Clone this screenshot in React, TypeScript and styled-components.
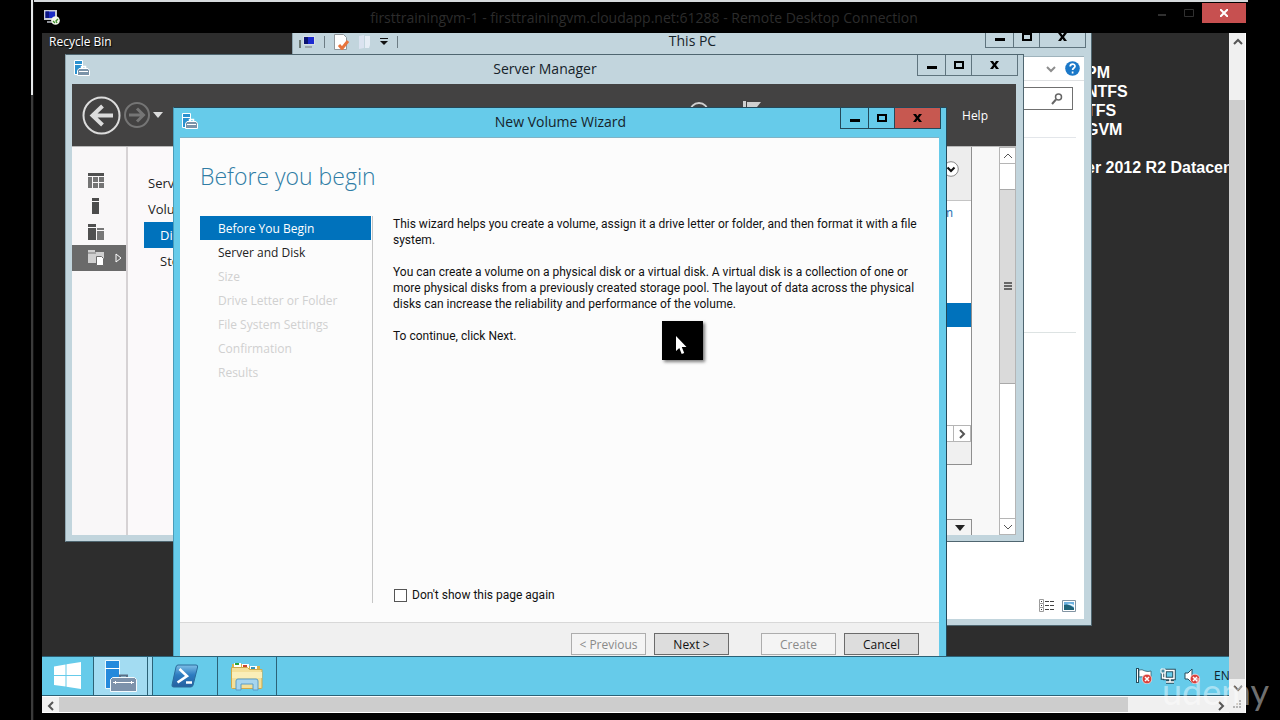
import React from 'react';
import styled, { createGlobalStyle, css } from 'styled-components';

const UI = '"Open Sans", "Noto Sans", sans-serif';

const Global = createGlobalStyle`
  * { box-sizing: border-box; }
  body { margin: 0; background: #000; font-family: ${UI}; font-size: 12px; line-height: 16px; }
  button, input { font: inherit; color: inherit; margin: 0; }
  button { padding: 0; border: 0; background: none; }
  h1, h2, p, ul { margin: 0; padding: 0; font-weight: 400; }
  svg { display: block; flex: none; }
`;

/* ---------- remote desktop frame ---------- */

const Page = styled.div`
  position: relative;
  display: flex;
  min-height: 100vh;
  padding: 0 32px 0 31px;
  overflow: hidden;
  background: #000;
`;

const Backdrop = styled.div`
  width: 3px;
  border-right: 1px solid #111;
  background: linear-gradient(#e6e8e9 95px, #3a3a3a 95px);
`;

const RemoteWindow = styled.div`
  flex: 1;
  min-width: 0;
  display: flex;
  flex-direction: column;
  padding: 0 2px 7px 8px;
  border-top: 2px solid #d6dadc;
`;

const RemoteTitle = styled.header`
  display: grid;
  grid-template-columns: 1fr auto 1fr;
  align-items: center;
  height: 31px;
  color: #2c2c2c;
  font-size: 14px;
`;

const RemoteControls = styled.div`
  display: flex;
  justify-content: flex-end;
  align-self: start;
  padding-top: 1px;
`;

const RemoteControl = styled.button<{ $close?: boolean }>`
  display: grid;
  place-items: center;
  width: ${p => (p.$close ? 44 : 27)}px;
  height: 20px;
  color: ${p => (p.$close ? '#fff' : '#303030')};
  background: ${p => (p.$close ? '#c75050' : 'transparent')};
`;

const Viewport = styled.div`
  flex: 1;
  display: grid;
  grid-template: minmax(0, 1fr) 17px / minmax(0, 1fr) 17px;
`;

const Session = styled.div`
  display: flex;
  flex-direction: column;
  overflow: hidden;
`;

const Desktop = styled.main`
  position: relative;
  flex: 1;
  min-height: 622px;
  overflow: hidden;
  background: #2d2d2d;
`;

const VerticalBar = styled.div`
  grid-row: 1 / 3;
  grid-column: 2;
  display: flex;
  flex-direction: column;
  border-right: 1px solid #fff;
  background: #f0f0f0;
  color: #555;
`;

const HorizontalBar = styled.div`
  display: flex;
  border-top: 1px solid #fff;
  border-bottom: 1px solid #fff;
  background: #f0f0f0;
  color: #555;
`;

const BarButton = styled.button`
  display: grid;
  place-items: center;
  width: 17px;
  height: 17px;
`;

const Thumb = styled.div`
  flex: 1;
  background: #cdcdcd;
`;

const TrackGap = styled.div<{ $size: number }>`
  flex: 0 0 ${p => p.$size}px;
`;

const Corner = styled.div`
  display: grid;
  place-items: center;
  height: 17px;
`;

/* ---------- desktop contents ---------- */

const ShortcutLabel = styled.p`
  position: absolute;
  left: 7px;
  top: 1px;
  color: #fff;
  text-shadow: 1px 1px 1px #000;
`;

const MachineInfo = styled.div`
  position: absolute;
  left: 1044px;
  top: 30px;
  color: #fff;
  font: bold 16px/19px "Liberation Sans", Arial, sans-serif;
  white-space: pre;
`;

const Frame = styled.section<{ $x: number; $y: number; $w: number; $h: number; $active?: boolean }>`
  position: absolute;
  left: ${p => p.$x}px;
  top: ${p => p.$y}px;
  width: ${p => p.$w}px;
  height: ${p => p.$h}px;
  display: flex;
  flex-direction: column;
  padding: 0 7px 6px 6px;
  border: 1px solid ${p => (p.$active ? '#23495a' : '#4f6670')};
  border-left-color: ${p => (p.$active ? '#4a9dba' : '#8fa6b0')};
  background: ${p => (p.$active ? '#66cbea' : '#c2d5dd')};
`;

const TitleBar = styled.header`
  display: grid;
  grid-template-columns: 1fr auto 1fr;
  flex: none;
  height: 29px;
  margin-right: -2px;
  color: #16232a;
`;

const TitleText = styled.h2`
  align-self: center;
  padding-bottom: 2px;
  font-size: 14px;
  line-height: 20px;
`;

const TitleIcons = styled.div`
  display: flex;
  align-items: center;
  padding: 0 0 3px 2px;
`;

const QuickTools = styled(TitleIcons)`
  gap: 9px;
  padding: 0;
`;

const Separator = styled.span`
  width: 1px;
  height: 12px;
  background: #6c7c84;
`;

const Controls = styled.div<{ $active?: boolean }>`
  display: flex;
  justify-self: end;
  height: 21px;
  border: 1px solid ${p => (p.$active ? '#23495a' : '#5f747e')};
  border-top: 0;
  color: #000;
`;

const Control = styled.button<{ $kind: 'min' | 'max' | 'close'; $active?: boolean }>`
  display: grid;
  place-items: center;
  width: ${p => ({ min: 27, max: 26, close: 46 })[p.$kind]}px;
  ${p => p.$kind !== 'min' && css`border-left: 1px solid ${p.$active ? '#23495a' : '#5f747e'};`}
  ${p => p.$kind === 'close' && p.$active && css`background: #c75850;`}
`;

/* ---------- This PC ---------- */

const ExplorerBody = styled.div`
  flex: 1;
  display: flex;
  flex-direction: column;
  background: #fff;
  border-top: 1px solid #9fb3bc;
`;

const RibbonRow = styled.div`
  display: flex;
  align-items: center;
  justify-content: flex-end;
  gap: 9px;
  height: 24px;
  padding-right: 4px;
  border-bottom: 1px solid #dfe1e3;
  color: #8d8d8d;
`;

const SearchRow = styled.div`
  display: flex;
  justify-content: flex-end;
  margin-right: 8px;
  padding: 6px 3px 27px 0;
  border-bottom: 1px solid #e3e6ea;
`;

const SearchBox = styled.label`
  display: flex;
  align-items: center;
  width: 180px;
  height: 23px;
  padding-right: 9px;
  border: 1px solid #707070;
  color: #666;
`;

const SearchInput = styled.input`
  flex: 1;
  min-width: 0;
  border: 0;
  outline: 0;
  background: transparent;
`;

const FileArea = styled.div`
  height: 195px;
  margin-right: 8px;
  border-bottom: 1px solid #dde3e3;
`;

const ViewSwitch = styled.div`
  display: flex;
  justify-content: flex-end;
  gap: 7px;
  margin-top: auto;
  padding: 0 8px 7px 0;
`;

/* ---------- Server Manager ---------- */

const ManagerHeader = styled.div`
  display: flex;
  align-items: center;
  height: 62px;
  flex: none;
  padding: 0 28px 0 10px;
  background: #434242;
  color: #fff;
`;

const NavArrows = styled.div`
  display: flex;
  align-items: center;
  gap: 3px;
`;

const HeaderTools = styled.div`
  display: flex;
  gap: 34px;
  margin: 0 201px 0 auto;
  padding-bottom: 4px;
`;

const HeaderLink = styled.button`
  padding-top: 2px;
`;

const ManagerBody = styled.div`
  flex: 1;
  min-height: 0;
  display: flex;
  background: #f8f8f8;
  border-top: 1px solid #b9b9b9;
`;

const IconRail = styled.nav`
  flex: none;
  width: 56px;
  padding-top: 20px;
  border-right: 2px solid #d6d2d4;
  background: #f9f7f8;
`;

const RailItem = styled.button<{ $on?: boolean }>`
  display: flex;
  align-items: center;
  gap: 11px;
  width: 54px;
  height: 26px;
  padding-left: 16px;
  background: ${p => (p.$on ? '#6a6a6a' : 'transparent')};
`;

const PageList = styled.nav`
  flex: 1;
  padding: 23px 0 0 16px;
  background: #fbf9fa;
  font-size: 13px;
`;

const PageLink = styled.a<{ $child?: boolean; $on?: boolean }>`
  display: block;
  height: 26px;
  padding-left: ${p => (p.$child ? 16 : 4)}px;
  line-height: 26px;
  color: ${p => (p.$on ? '#fff' : '#222')};
  background: ${p => (p.$on ? '#0072bc' : 'transparent')};
  text-decoration: none;
`;

const TileColumn = styled.div`
  display: flex;
  flex-direction: column;
  width: 80px;
  margin-right: 27px;
`;

const Tile = styled.div`
  display: flex;
  flex-direction: column;
  height: 318px;
  border: solid #8f8f8f;
  border-width: 0 1px 1px 0;
  background: #fff;
`;

const TileHead = styled.div`
  display: flex;
  justify-content: flex-end;
  align-items: center;
  height: 54px;
  padding: 0 12px 9px 0;
  border-bottom: 1px solid #c4c4c4;
  background: #ededed;
`;

const TileLink = styled.a`
  height: 102px;
  padding: 4px 18px 0 0;
  text-align: right;
  color: #1b6fb3;
  text-decoration: none;
`;

const SelectedRow = styled.div`
  height: 24px;
  background: #0072bc;
`;

const TileScroll = styled.div`
  display: flex;
  justify-content: flex-end;
  height: 17px;
  margin-top: auto;
  border: 1px solid #b5b5b5;
  color: #555;
`;

const TileScrollButton = styled(BarButton)`
  height: 15px;
  border-left: 1px solid #b5b5b5;
`;

const TileFoot = styled.div`
  height: 22px;
  background: #f0f0f0;
`;

const NextTile = styled.div`
  display: flex;
  justify-content: flex-end;
  align-items: center;
  height: 16px;
  margin-top: auto;
  padding-right: 6px;
  border: solid #8f8f8f;
  border-width: 1px 1px 0 0;
  background: #f4f4f4;
`;

const ManagerBar = styled.div`
  display: flex;
  flex-direction: column;
  width: 17px;
  border: 1px solid #b5b5b5;
  background: #fff;
  color: #555;
`;

const ManagerBarButton = styled.button<{ $end?: boolean }>`
  display: grid;
  place-items: center;
  height: 16px;
  border: 0 solid #b5b5b5;
  border-width: ${p => (p.$end ? '1px 0 0' : '0 0 1px')};
`;

const ManagerThumb = styled.div`
  display: grid;
  place-items: center;
  height: 195px;
  margin: 25px 0 auto;
  border: solid #a9a9a9;
  border-width: 1px 0;
  background: #dadada;
`;

/* ---------- wizard ---------- */

const WizardBody = styled.div`
  flex: 1;
  display: flex;
  flex-direction: column;
  background: #fcfcfc;
  border-top: 1px solid #7fb3c6;
`;

const WizardHeading = styled.h1`
  padding: 20px 20px 0;
  color: #2f7ca5;
  font-size: 23px;
  font-weight: 300;
  line-height: 36px;
`;

const WizardColumns = styled.div`
  display: flex;
  height: 387px;
  margin-top: 22px;
  padding-left: 20px;
`;

const Steps = styled.ul`
  width: 173px;
  flex: none;
  padding-right: 1px;
  border-right: 1px solid #c6c6c6;
  list-style: none;
`;

const Step = styled.li<{ $state: 'current' | 'open' | 'locked' }>`
  height: 24px;
  padding-left: 18px;
  line-height: 26px;
  color: ${p => ({ current: '#fff', open: '#222', locked: '#d0d0d0' })[p.$state]};
  background: ${p => (p.$state === 'current' ? '#0072bc' : 'transparent')};
`;

const Explanation = styled.div`
  flex: 1;
  display: flex;
  flex-direction: column;
  gap: 16px;
  padding-left: 20px;
  color: #111;
  font-family: Roboto, "Open Sans", sans-serif;
  white-space: nowrap;
`;

const SkipOption = styled.label`
  display: flex;
  align-items: center;
  gap: 5px;
  margin: auto 0 0 1px;
`;

const Checkbox = styled.input`
  appearance: none;
  width: 13px;
  height: 13px;
  border: 1px solid #555;
  background: #fff;
`;

const WizardFooter = styled.footer`
  display: flex;
  justify-content: flex-end;
  flex: 1;
  margin-top: 19px;
  padding: 10px 20px 0 0;
  border-top: 1px solid #d8d8d8;
  background: #f0f0f0;
`;

const ButtonPair = styled.div`
  display: flex;
  gap: 8px;
  margin-left: 32px;
`;

const PushButton = styled.button`
  width: 75px;
  height: 22px;
  padding-top: 1px;
  border: 1px solid #6b6b6b;
  background: #dddddd;
  color: #111;
  &:disabled {
    border-color: #adadad;
    background: #f4f4f4;
    color: #8a8a8a;
  }
`;

const Pointer = styled.div`
  position: absolute;
  left: 620px;
  top: 288px;
  width: 41px;
  height: 39px;
  padding: 15px 0 0 14px;
  background: #000;
  box-shadow: 2px 2px 3px rgba(0, 0, 0, 0.5);
`;

/* ---------- taskbar ---------- */

const Taskbar = styled.nav`
  display: flex;
  flex: none;
  height: 40px;
  border: solid #2c6277;
  border-width: 1px 0;
  background: #66cbea;
`;

const TaskButton = styled.button<{ $w: number; $on?: boolean }>`
  display: grid;
  place-items: center;
  width: ${p => p.$w}px;
  border-right: 1px solid #2c6277;
  background: ${p => (p.$on ? '#a3dcf2' : 'transparent')};
`;

const Tray = styled.div`
  display: flex;
  align-items: center;
  gap: 8px;
  margin-left: auto;
  color: #10222a;
`;

const Language = styled.span`
  width: 15px;
  margin-left: 6px;
`;

const Watermark = styled.div`
  position: absolute;
  right: 11px;
  bottom: 8px;
  color: rgba(255, 255, 255, 0.45);
  font: 36px/42px Lato, sans-serif;
`;

/* ---------- drawings ---------- */

const Chevron = ({ d, w = 2 }: { d: 'up' | 'down' | 'left' | 'right'; w?: number }) => {
  const paths = { up: 'M1 7l4-4 4 4', down: 'M1 3l4 4 4-4', left: 'M7 1L3 5l4 4', right: 'M3 1l4 4-4 4' };
  return (
    <svg width="10" height="10" viewBox="0 0 10 10" fill="none" stroke="currentColor" strokeWidth={w}>
      <path d={paths[d]} />
    </svg>
  );
};

const MinimizeGlyph = () => (
  <svg width="10" height="12" viewBox="0 0 10 12"><path d="M0 7h10v3H0z" fill="currentColor" /></svg>
);
const MaximizeGlyph = () => (
  <svg width="10" height="8" viewBox="0 0 10 8"><path d="M1 1h8v6H1z" fill="none" stroke="currentColor" strokeWidth="2" /></svg>
);
const CloseGlyph = () => (
  <svg width="9" height="8" viewBox="0 0 9 8"><path d="M0 0h3l1.500 2.300L6 0h3L6 4l3 4H6L4.500 5.700 3 8H0l3-4z" fill="currentColor" /></svg>
);

const ServerIcon = () => (
  <svg width="16" height="16" viewBox="0 0 16 16">
    <path d="M.5.5h8v14h-8z" fill="#2b91cf" stroke="#fff" />
    <path d="M1 4.500h7" stroke="#fff" />
    <path d="M7.500 8.500V6.500h4v2" fill="none" stroke="#fff" strokeWidth="1.500" />
    <path d="M3.500 10.500l1.500-2h9l1.500 2v5h-12z" fill="#7b93a8" stroke="#fff" />
    <path d="M5 11.500h9" stroke="#fff" />
  </svg>
);

const BigServerIcon = () => (
  <svg width="32" height="32" viewBox="0 0 32 32">
    <path d="M.5.5h14v28h-14z" fill="#2489dc" stroke="#e9f7fd" />
    <path d="M0 8.500h15" stroke="#fff" />
    <path d="M15 18v-2.500h7V18" fill="none" stroke="#5a6f86" strokeWidth="2" />
    <path d="M5.500 19.500l2-2h22l2 2v12h-26z" fill="#7d92ab" stroke="#f4fafd" />
    <path d="M8 22.500h21M10.500 21v3M26.500 21v3" stroke="#fff" />
  </svg>
);

const RemoteIcon = () => (
  <svg width="18" height="17" viewBox="0 0 18 17">
    <path d="M2 1h13v10H2z" fill="#c9ccd4" />
    <path d="M3.500 2.500H13V9H3.500z" fill="#1a2bc4" />
    <path d="M3.500 2.500H7V9H3.500z" fill="#0c1580" />
    <path d="M5 12h6v2H5z" fill="#8c8f96" />
    <circle cx="13.500" cy="11.500" r="4.300" fill="#f2f7ea" />
    <path d="M11 12l2 2M16 10l-2 2 1 2" stroke="#3d8d2a" strokeWidth="1.300" fill="none" />
  </svg>
);

const ComputerIcon = () => (
  <svg width="16" height="14" viewBox="0 0 16 14">
    <path d="M0 5h2v8H0z" fill="#6d7a76" />
    <path d="M4 1h12v9H4z" fill="#d7dde4" />
    <path d="M5 2h10v7H5z" fill="#1d2bd0" />
    <path d="M5 2h4v7H5z" fill="#0b1470" />
    <path d="M6 11h7v2H6z" fill="#9ca6ad" />
  </svg>
);

const PropertiesIcon = () => (
  <svg width="16" height="16" viewBox="0 0 16 16">
    <path d="M.5.500h9l3 3v12h-12z" fill="#fff" stroke="#90989c" />
    <path d="M5 11l3 3.500L14 7" fill="none" stroke="#e8743c" strokeWidth="3" />
  </svg>
);

const FolderFaint = () => (
  <svg width="12" height="14" viewBox="0 0 12 14">
    <path d="M0 1l5-1v13l-5 1z" fill="#dbe3f0" />
    <path d="M6 1h5v9l-1 3H6z" fill="#e6edf5" />
  </svg>
);

const ToolsMenuGlyph = () => (
  <svg width="8" height="7" viewBox="0 0 8 7"><path d="M0 0h8v1H0zM0 3h8L4 7z" fill="#111" /></svg>
);

const HelpIcon = () => (
  <svg width="15" height="15" viewBox="0 0 15 15">
    <circle cx="7.500" cy="7.500" r="7.300" fill="#1b78c8" />
    <path d="M5.200 5.500c0-3 4.800-3 4.800-.3 0 1.800-2.400 1.800-2.400 3.800M7.600 10.500v2" stroke="#fff" strokeWidth="1.700" fill="none" />
  </svg>
);

const SearchGlyph = () => (
  <svg width="12" height="12" viewBox="0 0 12 12" fill="none" stroke="currentColor">
    <circle cx="7.500" cy="4" r="3" strokeWidth="1.500" /><path d="M5 6.500L1 11" strokeWidth="2" />
  </svg>
);

const DetailsIcon = () => (
  <svg width="16" height="13" viewBox="0 0 16 13">
    {[0, 4, 8].map(y => (
      <g key={y} transform={`translate(0 ${y})`}>
        <path d="M.5.500h4v4h-4z" fill="#fff" stroke="#9a9a9a" />
        <path d="M2 2h1v1H2z" fill="#333" />
        <path d="M6 2.500h4M11 2.500h4" stroke="#444" />
      </g>
    ))}
  </svg>
);

const ThumbsIcon = () => (
  <svg width="14" height="12" viewBox="0 0 14 12">
    <path d="M.5.500h13v11H.500z" fill="#fff" stroke="#8294a3" />
    <path d="M2 2h10v8H2z" fill="#6db1e0" />
    <path d="M2 5q5-2 10 3v2H2z" fill="#1f6379" />
    <path d="M5 4q4-1 7 1v2q-3-2-7-3z" fill="#e9f5fb" />
  </svg>
);

const BackArrow = () => (
  <svg width="39" height="39" viewBox="0 0 39 39" fill="none" stroke="#dcdcdc">
    <circle cx="19.500" cy="19.500" r="18" strokeWidth="2" />
    <path d="M31 19.500H10M20.500 10l-10 9.500 10 9.500" strokeWidth="4" />
  </svg>
);

const ForwardArrow = () => (
  <svg width="26" height="26" viewBox="0 0 26 26" fill="none" stroke="#757575">
    <circle cx="13" cy="13" r="12" strokeWidth="2" />
    <path d="M5 13h14M13 6.500l6.500 6.500-6.500 6.500" strokeWidth="3" />
  </svg>
);

const Triangle = ({ color }: { color: string }) => (
  <svg width="10" height="6" viewBox="0 0 10 6"><path d="M0 0h10L5 6z" fill={color} /></svg>
);

const RefreshGlyph = () => (
  <svg width="20" height="24" viewBox="0 0 20 24" fill="none" stroke="#cfcfcf" strokeWidth="2"><circle cx="10" cy="11" r="9" /></svg>
);

const HeaderFlag = () => (
  <svg width="18" height="24" viewBox="0 0 18 24"><path d="M0 0h3v22H0zM4 1h14l-4 5 4 5H4z" fill="#cfcfcf" /></svg>
);

const DashboardIcon = () => (
  <svg width="16" height="15" viewBox="0 0 16 15">
    <path d="M0 0h16v3H0z" fill="#505050" />
    <path d="M0 4h4v11H0zM5 4h5v5H5zM11 4h5v5h-5zM5 10h5v5H5zM11 10h5v5h-5z" fill="#747474" />
  </svg>
);

const LocalIcon = () => (
  <svg width="16" height="16" viewBox="0 0 16 16"><path d="M4 0h7v3H4zM4 4h7v12H4z" fill="#4c4c4c" /></svg>
);

const AllServersIcon = () => (
  <svg width="16" height="16" viewBox="0 0 16 16">
    <path d="M0 0h8v3H0zM0 4h8v12H0z" fill="#505050" /><path d="M9 4h7v2H9zM9 7h7v9H9z" fill="#777" />
  </svg>
);

const StorageIcon = () => (
  <svg width="16" height="16" viewBox="0 0 16 16">
    <path d="M0 0h7v2h9v11H0z" fill="#d0d0d0" /><path d="M0 3h8" stroke="#777" />
    <path d="M8.500 6.500h5l2 2v7h-7z" fill="#fff" stroke="#6a6a6a" />
  </svg>
);

const ExpandGlyph = () => (
  <svg width="7" height="10" viewBox="0 0 7 10"><path d="M1 1v8l5-4z" fill="none" stroke="#fff" /></svg>
);

const CollapseButton = () => (
  <svg width="16" height="16" viewBox="0 0 16 16" fill="none">
    <circle cx="8" cy="8" r="7.300" fill="#fff" stroke="#888" /><path d="M4.500 6.500L8 10l3.500-3.500" stroke="#111" strokeWidth="2" />
  </svg>
);

const GripLines = () => (
  <svg width="8" height="9" viewBox="0 0 8 9"><path d="M0 0h8v2H0zM0 3h8v2H0zM0 6h8v2H0z" fill="#666" /></svg>
);

const SizeGrip = () => (
  <svg width="9" height="9" viewBox="0 0 9 9">
    <path d="M6 0h2v2H6zM3 3h2v2H3zM6 3h2v2H6zM0 6h2v2H0zM3 6h2v2H3zM6 6h2v2H6z" fill="#b5b5b5" />
  </svg>
);

const WindowsLogo = () => (
  <svg width="28" height="28" viewBox="0 0 28 28" fill="#fff">
    <path d="M0 4.500L11.500 2.500V13H0zM12.500 2.300L27 0v13H12.500zM0 14h11.500v10.500L0 23zM12.500 14H27v13l-14.500-2.300z" />
  </svg>
);

const PowerShellIcon = () => (
  <svg width="28" height="24" viewBox="0 0 28 24">
    <defs>
      <linearGradient id="ps" x1="0" y1="0" x2="0" y2="1">
        <stop offset="0" stopColor="#7fc0e8" /><stop offset=".45" stopColor="#2d7cc0" /><stop offset="1" stopColor="#2560a0" />
      </linearGradient>
    </defs>
    <path d="M7 1h18q2 0 1.600 2l-4.500 18q-.5 2-2.500 2h-17q-2 0-1.600-2L5 3q.5-2 2-2z" fill="url(#ps)" stroke="#2a6c9c" />
    <path d="M8.500 5l7.500 7-9.500 6.500M15 18.500h6" fill="none" stroke="#fff" strokeWidth="2.600" />
  </svg>
);

const FilesIcon = () => (
  <svg width="32" height="29" viewBox="0 0 32 29">
    <path d="M1 2h10l2 2h16v4H1z" fill="#d9b24a" />
    <path d="M3 1h7v4H3zM11 2h7v4h-7zM19 4h7v4h-7z" fill="#fff" />
    <path d="M4 1h4v2H4z" fill="#2ea336" /><path d="M12 3h4v2h-4z" fill="#c8452e" /><path d="M20 5h4v2h-4z" fill="#3596b8" />
    <path d="M.5 5.500h16l2 2h12.500v18q0 1-1 1H1.500q-1 0-1-1z" fill="#f4e09a" stroke="#cfa94a" />
    <path d="M1 10h30v6H1z" fill="#faeeb8" />
    <path d="M5 28V19q0-2 2-2h18q2 0 2 2v9h-5v-6H10v6z" fill="#a6d5ef" stroke="#5a9cc6" />
  </svg>
);

const ErrorBadge = () => (
  <>
    <circle cx="11" cy="11" r="4.800" fill="#d9403a" stroke="#fff" strokeWidth=".6" />
    <path d="M9 9l4 4M13 9l-4 4" stroke="#fff" strokeWidth="1.500" />
  </>
);

const ActionFlag = () => (
  <svg width="16" height="16" viewBox="0 0 16 16">
    <path d="M1.500 0v15" stroke="#274d5c" strokeWidth="3" /><path d="M1.500 1v13" stroke="#fff" />
    <path d="M3 2q3-1 6 1 3 1 6 0v7q-3 1-6 0-3-2-6-1z" fill="#fff" stroke="#274d5c" strokeWidth=".7" />
    <ErrorBadge />
  </svg>
);

const NetworkIcon = () => (
  <svg width="16" height="16" viewBox="0 0 16 16" fill="none">
    <path d="M5 2.500h9v8H5zM10 11v3M6 14h8M2.500 4v6h3" stroke="#274d5c" strokeWidth="3.500" />
    <path d="M5 2.500h9v8H5zM10 11v3M6 14h8M2.500 4v6h3" stroke="#fff" strokeWidth="1.500" />
    <path d="M1 1h4v4H1z" fill="#4a8ca3" stroke="#fff" />
  </svg>
);

const SoundIcon = () => (
  <svg width="16" height="16" viewBox="0 0 16 16">
    <path d="M1 5h3l4-4v14l-4-4H1z" fill="#fff" stroke="#274d5c" />
    <ErrorBadge />
  </svg>
);

const ArrowPointer = () => (
  <svg width="11" height="19" viewBox="0 0 11 19"><path d="M0 0v15l3.300-3 2.400 6 2.500-1-2.400-6H10.500z" fill="#fff" /></svg>
);

const WindowControls = ({ active }: { active?: boolean }) => (
  <Controls $active={active}>
    <Control $kind="min" $active={active} aria-label="Minimize"><MinimizeGlyph /></Control>
    <Control $kind="max" $active={active} aria-label="Maximize"><MaximizeGlyph /></Control>
    <Control $kind="close" $active={active} aria-label="Close"><CloseGlyph /></Control>
  </Controls>
);

/* ---------- windows ---------- */

const ThisPC = () => (
  <Frame $x={250} $y={-7} $w={800} $h={600}>
    <TitleBar>
      <QuickTools>
        <ComputerIcon /><Separator /><PropertiesIcon /><FolderFaint /><ToolsMenuGlyph /><Separator />
      </QuickTools>
      <TitleText>This PC</TitleText>
      <WindowControls />
    </TitleBar>
    <ExplorerBody>
      <RibbonRow><Chevron d="down" /><HelpIcon /></RibbonRow>
      <SearchRow>
        <SearchBox><SearchInput aria-label="Search This PC" /><SearchGlyph /></SearchBox>
      </SearchRow>
      <FileArea />
      <ViewSwitch>
        <button aria-label="Details"><DetailsIcon /></button>
        <button aria-label="Large thumbnails"><ThumbsIcon /></button>
      </ViewSwitch>
    </ExplorerBody>
  </Frame>
);

const ServerManager = () => (
  <Frame $x={23} $y={21} $w={959} $h={488}>
    <TitleBar>
      <TitleIcons><ServerIcon /></TitleIcons>
      <TitleText>Server Manager</TitleText>
      <WindowControls />
    </TitleBar>
    <ManagerHeader>
      <NavArrows><BackArrow /><ForwardArrow /><Triangle color="#dcdcdc" /></NavArrows>
      <HeaderTools><RefreshGlyph /><HeaderFlag /></HeaderTools>
      <HeaderLink>Help</HeaderLink>
    </ManagerHeader>
    <ManagerBody>
      <IconRail>
        <RailItem aria-label="Dashboard"><DashboardIcon /></RailItem>
        <RailItem aria-label="Local server"><LocalIcon /></RailItem>
        <RailItem aria-label="All servers"><AllServersIcon /></RailItem>
        <RailItem $on aria-label="File and storage services"><StorageIcon /><ExpandGlyph /></RailItem>
      </IconRail>
      <PageList>
        <PageLink href="#servers">Servers</PageLink>
        <PageLink href="#volumes">Volumes</PageLink>
        <PageLink href="#disks" $child $on>Disks</PageLink>
        <PageLink href="#pools" $child>Storage</PageLink>
      </PageList>
      <TileColumn>
        <Tile>
          <TileHead><CollapseButton /></TileHead>
          <TileLink href="#column">m</TileLink>
          <SelectedRow />
          <TileScroll><TileScrollButton aria-label="Scroll right"><Chevron d="right" /></TileScrollButton></TileScroll>
          <TileFoot />
        </Tile>
        <NextTile><Triangle color="#222" /></NextTile>
      </TileColumn>
      <ManagerBar>
        <ManagerBarButton aria-label="Scroll up"><Chevron d="up" w={1} /></ManagerBarButton>
        <ManagerThumb><GripLines /></ManagerThumb>
        <ManagerBarButton $end aria-label="Scroll down"><Chevron d="down" w={1} /></ManagerBarButton>
      </ManagerBar>
    </ManagerBody>
  </Frame>
);

const STEPS = ['Before You Begin', 'Server and Disk', 'Size', 'Drive Letter or Folder', 'File System Settings', 'Confirmation', 'Results'];

const Wizard = () => (
  <Frame $active $x={131} $y={74} $w={774} $h={572}>
    <TitleBar>
      <TitleIcons><ServerIcon /></TitleIcons>
      <TitleText>New Volume Wizard</TitleText>
      <WindowControls active />
    </TitleBar>
    <WizardBody>
      <WizardHeading>Before you begin</WizardHeading>
      <WizardColumns>
        <Steps>
          {STEPS.map((name, i) => (
            <Step key={name} $state={i === 0 ? 'current' : i === 1 ? 'open' : 'locked'}>{name}</Step>
          ))}
        </Steps>
        <Explanation>
          <p>
            This wizard helps you create a volume, assign it a drive letter or folder, and then format it with a file<br />
            system.
          </p>
          <p>
            You can create a volume on a physical disk or a virtual disk. A virtual disk is a collection of one or<br />
            more physical disks from a previously created storage pool. The layout of data across the physical<br />
            disks can increase the reliability and performance of the volume.
          </p>
          <p>To continue, click Next.</p>
          <SkipOption><Checkbox type="checkbox" />Don't show this page again</SkipOption>
        </Explanation>
      </WizardColumns>
      <WizardFooter>
        <ButtonPair>
          <PushButton disabled>&lt; Previous</PushButton>
          <PushButton>Next &gt;</PushButton>
        </ButtonPair>
        <ButtonPair>
          <PushButton disabled>Create</PushButton>
          <PushButton>Cancel</PushButton>
        </ButtonPair>
      </WizardFooter>
    </WizardBody>
  </Frame>
);

export default function App() {
  return (
    <>
      <Global />
      <Page>
        <Backdrop />
        <RemoteWindow>
          <RemoteTitle>
            <RemoteIcon />
            <span>firsttrainingvm-1 - firsttrainingvm.cloudapp.net:61288 - Remote Desktop Connection</span>
            <RemoteControls>
              <RemoteControl aria-label="Minimize"><svg width="8" height="8"><path d="M0 5h8v2H0z" fill="currentColor" /></svg></RemoteControl>
              <RemoteControl aria-label="Maximize"><svg width="10" height="8"><path d="M.5.5h9v7h-9z" fill="none" stroke="currentColor" /></svg></RemoteControl>
              <RemoteControl $close aria-label="Close"><svg width="8" height="8"><path d="M0 0l8 8M8 0L0 8" stroke="currentColor" strokeWidth="2" /></svg></RemoteControl>
            </RemoteControls>
          </RemoteTitle>
          <Viewport>
            <Session>
              <Desktop>
                <ShortcutLabel>Recycle Bin</ShortcutLabel>
                <MachineInfo>{'PM\nNTFS\nTFS\nGVM\n\ner 2012 R2 Datacen'}</MachineInfo>
                <ThisPC />
                <ServerManager />
                <Wizard />
                <Pointer><ArrowPointer /></Pointer>
              </Desktop>
              <Taskbar>
                <TaskButton $w={52} aria-label="Start"><WindowsLogo /></TaskButton>
                <TaskButton $w={54} $on aria-label="Server Manager"><BigServerIcon /></TaskButton>
                <TaskButton $w={5} $on aria-label="More Server Manager windows" />
                <TaskButton $w={65} aria-label="Windows PowerShell"><PowerShellIcon /></TaskButton>
                <TaskButton $w={59} aria-label="File Explorer"><FilesIcon /></TaskButton>
                <Tray><ActionFlag /><NetworkIcon /><SoundIcon /><Language>EN</Language></Tray>
              </Taskbar>
            </Session>
            <VerticalBar>
              <BarButton aria-label="Scroll up"><Chevron d="up" /></BarButton>
              <TrackGap $size={50} />
              <Thumb />
              <BarButton aria-label="Scroll down"><Chevron d="down" /></BarButton>
              <Corner><SizeGrip /></Corner>
            </VerticalBar>
            <HorizontalBar>
              <BarButton aria-label="Scroll left"><Chevron d="left" /></BarButton>
              <Thumb />
              <TrackGap $size={84} />
              <BarButton aria-label="Scroll right"><Chevron d="right" /></BarButton>
            </HorizontalBar>
          </Viewport>
        </RemoteWindow>
        <Watermark>udemy</Watermark>
      </Page>
    </>
  );
}
